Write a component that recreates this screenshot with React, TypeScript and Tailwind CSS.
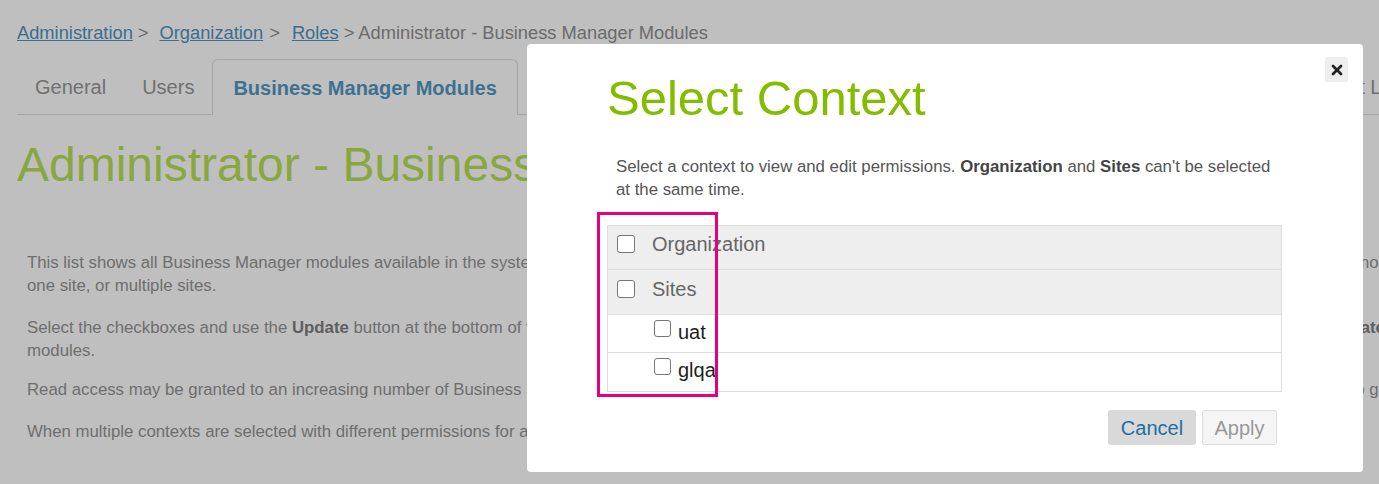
import React from 'react';
import { X } from 'lucide-react';

const Checkbox: React.FC<{ small?: boolean }> = ({ small }) => (
  <span
    className={`inline-block shrink-0 bg-white border border-[#767676] rounded-[3px] ${
      small ? 'w-[17px] h-[17px]' : 'w-[18px] h-[18px]'
    }`}
  />
);

const App: React.FC = () => {
  const tabs = ['General', 'Users'];
  const moreTabs = ['Functional Permissions', 'Channel Permissions', 'Content Locale Permissions'];

  const contexts = [
    { name: 'Organization', level: 0 },
    { name: 'Sites', level: 0 },
    { name: 'uat', level: 1 },
    { name: 'glqa', level: 1 },
  ];

  return (
    <div className="relative w-[1379px] h-[484px] overflow-hidden bg-[#bfbfbf] font-['Liberation_Sans',Arial,sans-serif]">
      {/* Page (dimmed by overlay) */}
      <div className="w-[1800px] pl-[17px] pt-[21px]">
        {/* Breadcrumb */}
        <div className="flex items-center h-[24px] text-[18.3px] text-[#6b6b6b] whitespace-nowrap">
          <a className="underline text-[#3b6d8f]">Administration</a>
          <span className="ml-[5px] mr-[11px]">&gt;</span>
          <a className="underline text-[#3b6d8f]">Organization</a>
          <span className="ml-[6px] mr-[12px]">&gt;</span>
          <a className="underline text-[#3b6d8f]">Roles</a>
          <span className="ml-[5px]">&gt; Administrator - Business Manager Modules</span>
        </div>

        {/* Tabs */}
        <div className="mt-[15px] flex items-end h-[55px] border-b border-[#a6a6a6] text-[20px] whitespace-nowrap">
          {tabs.map((t) => (
            <div key={t} className="h-full flex items-center px-[18px] text-[#707070]">
              {t}
            </div>
          ))}
          <div className="h-[56px] -mb-px flex items-center px-[20px] font-bold text-[#3d7191] border border-b-0 border-[#a6a6a6] rounded-t-[6px] bg-[#bfbfbf]">
            Business Manager Modules
          </div>
          {moreTabs.map((t) => (
            <div key={t} className="h-full flex items-center px-[18px] text-[#707070]">
              {t}
            </div>
          ))}
          <div className="h-full flex items-center pl-[22px] pr-[18px] text-[#707070]">Account Log</div>
        </div>

        {/* Heading */}
        <h1 className="mt-[26px] text-[48px] leading-none text-[#8aa63e] whitespace-nowrap">
          Administrator - Business Manager Modules
        </h1>

        {/* Description */}
        <div className="mt-[62px] pl-[10px] text-[16.8px] leading-[23px] text-[#6e6e6e] whitespace-nowrap">
          <p className="mb-[19px]">
            <span className="block">
              This list shows all Business Manager modules available in the system. Access can be granted for the organization, for only a single site, for a group of sites, for all sites at once, or more than
            </span>
            <span className="block">one site, or multiple sites.</span>
          </p>
          <p className="mb-[16px]">
            <span className="block">
              Select the checkboxes and use the <b className="text-[#5e5e5e]">Update</b> button at the bottom of the page to grant access to the selected modules. To remove the access, clear the checkboxes and use the{' '}
              <b className="text-[#5e5e5e]">Update</b> button
            </span>
            <span className="block">modules.</span>
          </p>
          <p className="mb-[19px]">
            Read access may be granted to an increasing number of Business Manager modules, depending on the permissions that are set for each context, so it is therefore very important to grant access to the right contexts.
          </p>
          <p>
            When multiple contexts are selected with different permissions for a module, the lowest common permission is shown.
          </p>
        </div>
      </div>

      {/* Modal */}
      <div className="absolute left-[527px] top-[44px] w-[836px] h-[428px] bg-white rounded-[4px]">
        <button className="absolute right-[15px] top-[13px] w-[23px] h-[25px] flex items-center justify-center bg-[#eeeeee] rounded-[2px]">
          <X className="w-[16px] h-[16px] text-[#222]" strokeWidth={4} />
        </button>

        <div className="pl-[80px] pt-[30px] w-[755px]">
          <h2 className="text-[49px] leading-none text-[#84bd00] whitespace-nowrap">Select Context</h2>

          <p className="mt-[32px] pl-[9px] pr-[4px] text-[16.8px] leading-[23px] text-[#555]">
            Select a context to view and edit permissions. <b className="text-[#444]">Organization</b> and{' '}
            <b className="text-[#444]">Sites</b> can't be selected at the same time.
          </p>

          <div className="mt-[24px] border border-[#dddddd]">
            {contexts.map((c, i) =>
              c.level === 0 ? (
                <div
                  key={c.name}
                  className={`flex items-center gap-[17px] pl-[9px] pb-[7px] bg-[#eeeeee] border-b border-[#dddddd] ${
                    i === 0 ? 'h-[44px]' : 'h-[45px]'
                  }`}
                >
                  <Checkbox />
                  <span className="text-[20px] text-[#666]">{c.name}</span>
                </div>
              ) : (
                <div
                  key={c.name}
                  className={`flex items-center gap-[7px] pl-[46px] pb-[4px] h-[38px] bg-white ${
                    i < contexts.length - 1 ? 'border-b border-[#dddddd]' : ''
                  }`}
                >
                  <span className="mb-[7px] flex">
                    <Checkbox small />
                  </span>
                  <span className="text-[20px] text-[#222]">{c.name}</span>
                </div>
              )
            )}
          </div>

          <div className="mt-[18px] flex justify-end gap-[6px] pr-[5px]">
            <button className="w-[88px] h-[35px] rounded-[3px] bg-[#d9d9d9] text-[20px] text-[#1f6ea5]">Cancel</button>
            <button className="w-[75px] h-[35px] rounded-[3px] bg-[#f5f5f5] border border-[#dddddd] text-[20px] text-[#999]">
              Apply
            </button>
          </div>
        </div>

        {/* Highlight box */}
        <div className="absolute left-[70px] top-[168px] w-[121px] h-[185px] border-[3px] border-[#e5007d] pointer-events-none" />
      </div>
    </div>
  );
};

export default App;
